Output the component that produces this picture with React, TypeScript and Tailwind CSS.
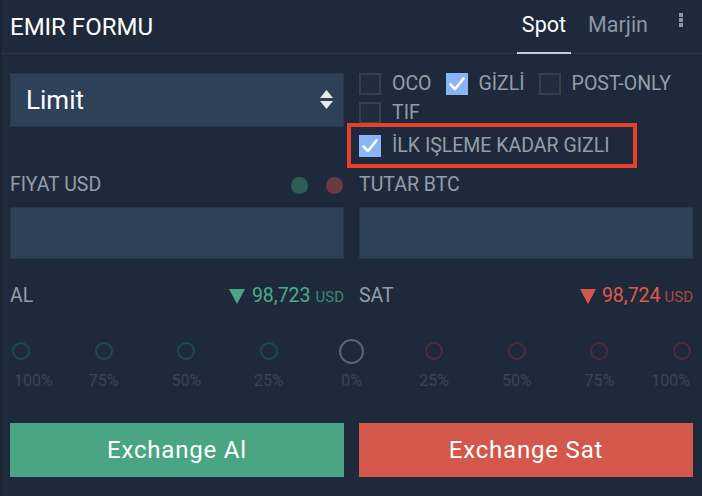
import React from "react";

const pcts = ["100%", "75%", "50%", "25%", "0%", "25%", "50%", "75%", "100%"];

function Check({ checked }: { checked?: boolean }) {
  if (checked) {
    return (
      <div className="w-[22px] h-[22px] flex items-center justify-center bg-[#8ab4f8] flex-none">
        <svg width="18" height="18" viewBox="0 0 18 18" fill="none" stroke="#fff" strokeWidth="2.6" strokeLinecap="round" strokeLinejoin="round">
          <polyline points="2.5 9.5 7 14 15.5 3.5" />
        </svg>
      </div>
    );
  }
  return <div className="w-[22px] h-[22px] bg-[#212d3d] border-2 border-[#36414f] flex-none" />;
}

function Opt({ label, checked }: { label: string; checked?: boolean }) {
  return (
    <div className="flex items-center gap-[11px] h-[22px]">
      <Check checked={checked} />
      <span className="text-[19.5px] text-[#959ea8] leading-none">{label}</span>
    </div>
  );
}

function Tri({ color }: { color: string }) {
  return (
    <svg width="16" height="15" viewBox="0 0 16 15">
      <polygon points="0,0 16,0 8,15" fill={color} />
    </svg>
  );
}

export default function App() {
  return (
    <div className="w-[702px] h-[496px] bg-[#1e2a3b] border-l-2 border-[#1a2534] overflow-hidden"
      style={{ fontFamily: "Roboto, 'Liberation Sans', sans-serif" }}>
      {/* header */}
      <header className="h-[54px] border-b border-[#2b3847] flex items-center pl-[8px] pr-[19px]">
        <h1 className="flex-1 text-[24px] text-white leading-none">EMIR FORMU</h1>
        <div className="flex items-stretch h-full">
          <div className="relative flex items-center px-[5px] text-[21.5px] text-white">
            <span className="-mt-[3px]">Spot</span>
            <div className="absolute left-0 right-0 bottom-[-1px] h-[2px] bg-[#c8cdd3]" />
          </div>
          <div className="flex items-center ml-[17px] text-[21.5px] text-[#8d97a2]">
            <span className="-mt-[3px]">Marjin</span>
          </div>
          <div className="flex flex-col gap-[1px] ml-[31px] mt-[13px]">
            <span className="w-[4px] h-[4px] bg-[#8d97a2]" />
            <span className="w-[4px] h-[4px] bg-[#8d97a2]" />
            <span className="w-[4px] h-[4px] bg-[#8d97a2]" />
          </div>
        </div>
      </header>

      <div className="pl-[8px] pr-[9px]">
        {/* type + options */}
        <div className="grid grid-cols-2 gap-x-[15px] pt-[19px]">
          <div className="h-[54px] bg-[#2e4159] border border-[#27384d] flex items-center pl-[15px] pr-[10px]">
            <span className="flex-1 text-[26px] text-white">Limit</span>
            <svg width="13" height="20" viewBox="0 0 13 20" fill="#e6e9ed">
              <polygon points="6.5,0 13,8 0,8" />
              <polygon points="0,11 13,11 6.5,19" />
            </svg>
          </div>
          <div className="flex flex-col">
            <div className="flex items-center gap-[14px]">
              <Opt label="OCO" />
              <Opt label="GİZLİ" checked />
              <Opt label="POST-ONLY" />
            </div>
            <div className="mt-[7px]">
              <Opt label="TIF" />
            </div>
            <div className="-mt-[1px] -ml-[12px] w-[290px] h-[45px] border-4 border-[#e8402a] flex items-center pl-[8px]">
              <Opt label="İLK IŞLEME KADAR GIZLI" checked />
            </div>
          </div>
        </div>

        {/* price / amount */}
        <div className="grid grid-cols-2 gap-x-[15px] mt-[6px]">
          <div>
            <div className="h-[22px] flex items-center">
              <span className="flex-1 text-[19.5px] text-[#959ea8]">FIYAT USD</span>
              <span className="w-[17px] h-[17px] rounded-full bg-[#2e5e55]" />
              <span className="w-[17px] h-[17px] rounded-full bg-[#6a3a41] ml-[18px] mr-[1px]" />
            </div>
            <div className="mt-[11px] h-[52px] bg-[#2e4159] border border-[#27384d]" />
          </div>
          <div>
            <div className="h-[22px] flex items-center">
              <span className="text-[19.5px] text-[#959ea8]">TUTAR BTC</span>
            </div>
            <div className="mt-[11px] h-[52px] bg-[#2e4159] border border-[#27384d]" />
          </div>
        </div>

        {/* best prices */}
        <div className="grid grid-cols-2 gap-x-[15px] mt-[25px]">
          <div className="h-[24px] flex items-center">
            <span className="flex-1 text-[19.5px] text-[#959ea8]">AL</span>
            <Tri color="#4ca585" />
            <span className="ml-[7px] text-[19.5px] text-[#4caa88]">98,723</span>
            <span className="ml-[5px] mt-[2px] text-[15px] text-[#3d8a70]">USD</span>
          </div>
          <div className="h-[24px] flex items-center">
            <span className="flex-1 text-[19.5px] text-[#959ea8]">SAT</span>
            <Tri color="#d9574a" />
            <span className="ml-[6px] text-[19.5px] text-[#e05a4c]">98,724</span>
            <span className="ml-[4px] mt-[2px] text-[15px] text-[#a94a42]">USD</span>
          </div>
        </div>
      </div>

      {/* slider */}
      <div className="mt-[30px] flex justify-between pl-[6px] pr-[7px]">
        {pcts.map((p, i) => (
          <div key={i} className="w-[26px] h-[26px] flex items-center justify-center">
            {i === 4 ? (
              <span className="w-[25px] h-[25px] rounded-full border-2 border-[#5a6674]" />
            ) : (
              <span className={"w-[18px] h-[18px] rounded-full border-2 " + (i < 4 ? "border-[#1f4a4b]" : "border-[#4b2f37]")} />
            )}
          </div>
        ))}
      </div>
      <div className="mt-[7px] flex justify-between pl-[6px] pr-[7px]">
        {pcts.map((p, i) => (
          <div key={i}
            className={"w-[26px] h-[20px] flex items-center whitespace-nowrap text-[16px] text-[#3a4657] " +
              (i === 0 ? "justify-start pl-[6px]" : i === 8 ? "justify-end pr-[5px]" : "justify-center")}>
            {p}
          </div>
        ))}
      </div>

      {/* actions */}
      <div className="mt-[32px] grid grid-cols-2 gap-x-[15px] pl-[8px] pr-[9px]">
        <button className="h-[54px] bg-[#4aa584] text-white text-[24px] tracking-[0.8px]">Exchange Al</button>
        <button className="h-[54px] bg-[#d3574b] text-white text-[24px] tracking-[0.8px]">Exchange Sat</button>
      </div>
    </div>
  );
}
